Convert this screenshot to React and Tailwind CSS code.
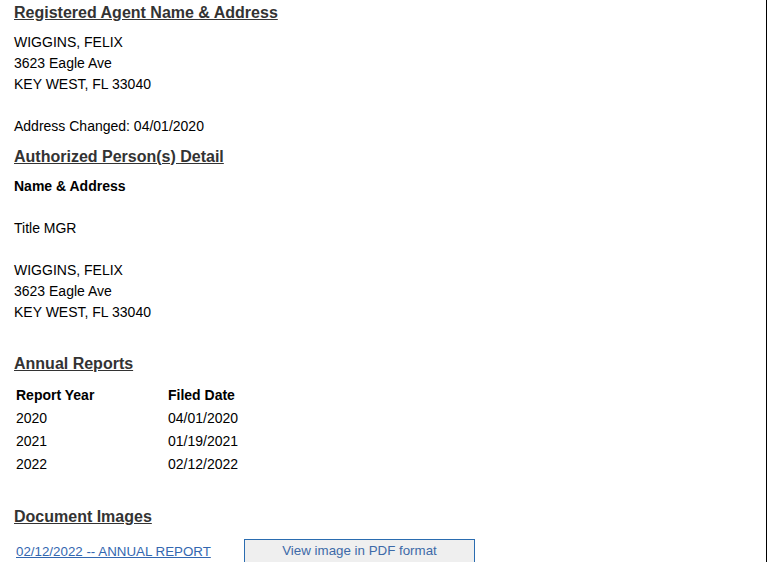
import React from 'react';

const reports = [
  { year: '2020', filed: '04/01/2020' },
  { year: '2021', filed: '01/19/2021' },
  { year: '2022', filed: '02/12/2022' },
];

// Section heading, bold and underlined like the state filing page
const Heading = ({ children, className = '' }) => (
  <h2 className={`text-[16px] leading-[20px] font-bold underline text-[#333333] ${className}`}>
    {children}
  </h2>
);

export default function App() {
  return (
    <div
      className="w-[767px] h-[562px] overflow-hidden border-r border-black bg-white text-black"
      style={{ fontFamily: '"Liberation Sans", Arial, sans-serif' }}
    >
      <div className="pl-[14px] pt-[3px] text-[14px] leading-[21px]">
        <Heading>Registered Agent Name &amp; Address</Heading>
        <div className="mt-[9px]">
          <div>WIGGINS, FELIX</div>
          <div>3623 Eagle Ave</div>
          <div>KEY WEST, FL 33040</div>
          <div className="h-[21px]" />
          <div>Address Changed: 04/01/2020</div>
        </div>

        <Heading className="mt-[10px]">Authorized Person(s) Detail</Heading>
        <div className="mt-[9px]">
          <div className="font-bold">Name &amp; Address</div>
          <div className="h-[21px]" />
          <div>Title MGR</div>
          <div className="h-[21px]" />
          <div>WIGGINS, FELIX</div>
          <div>3623 Eagle Ave</div>
          <div>KEY WEST, FL 33040</div>
        </div>

        <Heading className="mt-[31px]">Annual Reports</Heading>
        <table className="mt-[10px] border-collapse">
          <thead>
            <tr className="h-[23px] text-left">
              <th className="w-[152px] px-[2px] font-bold">Report Year</th>
              <th className="px-[2px] font-bold">Filed Date</th>
            </tr>
          </thead>
          <tbody>
            {reports.map((r) => (
              <tr key={r.year} className="h-[23px]">
                <td className="px-[2px]">{r.year}</td>
                <td className="px-[2px]">{r.filed}</td>
              </tr>
            ))}
          </tbody>
        </table>

        <Heading className="mt-[31px]">Document Images</Heading>
        <div className="mt-[12px] flex items-start">
          <a href="#" className="w-[230px] pl-[2px] pt-[2px] text-[13.33px] text-[#3367b0] underline">
            02/12/2022 -- ANNUAL REPORT
          </a>
          <button className="w-[231px] h-[26px] pb-[3px] leading-[16px] border border-[#2a6cb0] bg-[#efefef] text-[13.33px] text-[#3d6aa8]">
            View image in PDF format
          </button>
        </div>
      </div>
    </div>
  );
}
